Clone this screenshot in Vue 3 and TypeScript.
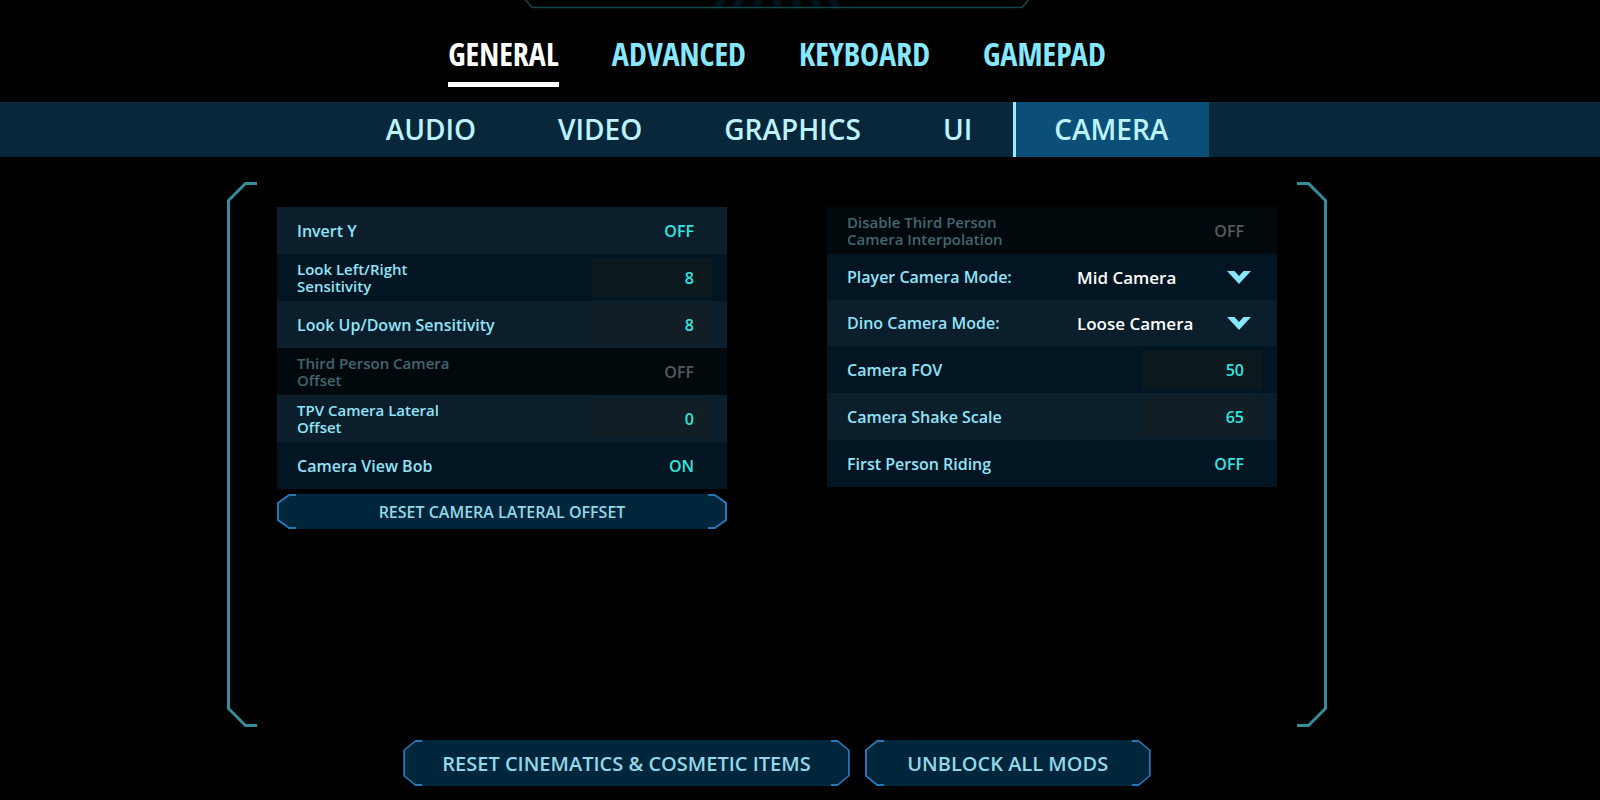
<script setup lang="ts">
import { ref } from 'vue'

type Kind = 'toggle' | 'number' | 'choice'

interface Setting {
  id: string
  label: string
  kind: Kind
  value: string
  options?: string[]
  disabled?: boolean
}

const mainTabs = ['GENERAL', 'ADVANCED', 'KEYBOARD', 'GAMEPAD']
const subTabs = ['AUDIO', 'VIDEO', 'GRAPHICS', 'UI', 'CAMERA']
const activeMain = ref('GENERAL')
const activeSub = ref('CAMERA')

const left = ref<Setting[]>([
  { id: 'invert-y', label: 'Invert Y', kind: 'toggle', value: 'OFF' },
  { id: 'look-lr', label: 'Look Left/Right\nSensitivity', kind: 'number', value: '8' },
  { id: 'look-ud', label: 'Look Up/Down Sensitivity', kind: 'number', value: '8' },
  { id: 'tp-offset', label: 'Third Person Camera\nOffset', kind: 'toggle', value: 'OFF', disabled: true },
  { id: 'tpv-lateral', label: 'TPV Camera Lateral\nOffset', kind: 'number', value: '0' },
  { id: 'view-bob', label: 'Camera View Bob', kind: 'toggle', value: 'ON' },
])

const right = ref<Setting[]>([
  { id: 'tp-interp', label: 'Disable Third Person\nCamera Interpolation', kind: 'toggle', value: 'OFF', disabled: true },
  { id: 'player-mode', label: 'Player Camera Mode:', kind: 'choice', value: 'Mid Camera', options: ['Close Camera', 'Mid Camera', 'Far Camera'] },
  { id: 'dino-mode', label: 'Dino Camera Mode:', kind: 'choice', value: 'Loose Camera', options: ['Loose Camera', 'Locked Camera'] },
  { id: 'fov', label: 'Camera FOV', kind: 'number', value: '50' },
  { id: 'shake', label: 'Camera Shake Scale', kind: 'number', value: '65' },
  { id: 'fp-riding', label: 'First Person Riding', kind: 'toggle', value: 'OFF' },
])

const sides = ['start', 'end']
const columns = [left, right]
const footerButtons = ['RESET CINEMATICS & COSMETIC ITEMS', 'UNBLOCK ALL MODS']

function flip(s: Setting) {
  s.value = s.value === 'ON' ? 'OFF' : 'ON'
}
</script>

<template>
  <div class="page">
    <svg class="crest" width="512" height="12" viewBox="0 0 512 12" aria-hidden="true">
      <defs>
        <filter id="soft" x="-20%" y="-50%" width="140%" height="200%">
          <feGaussianBlur stdDeviation="2" />
        </filter>
      </defs>
      <g filter="url(#soft)" stroke="#041c26" stroke-width="6" fill="none">
        <path d="M203 -2L195 8M220 -2L214 8M238 -2L235 8M256 -2V8M274 -2L277 8M292 -2L298 8M309 -2L317 8" />
      </g>
      <path d="M3 -2L11 7.5H501L509 -2" fill="none" stroke="#15484a" stroke-width="1.5" />
    </svg>

    <nav class="main-tabs" aria-label="Settings sections">
      <button
        v-for="tab in mainTabs"
        :key="tab"
        type="button"
        class="main-tab"
        :class="{ active: tab === activeMain }"
        @click="activeMain = tab"
      >{{ tab }}</button>
    </nav>

    <nav class="sub-tabs" aria-label="General settings">
      <button
        v-for="tab in subTabs"
        :key="tab"
        type="button"
        class="sub-tab"
        :class="{ active: tab === activeSub }"
        @click="activeSub = tab"
      >{{ tab }}</button>
    </nav>

    <main class="panel">
      <div v-for="side in sides" :key="side" class="bracket" :class="side" aria-hidden="true">
        <svg width="30" height="20" viewBox="0 0 30 20"><path d="M1.5 20V18.5L18.5 1.5H30" /></svg>
        <span class="bracket-line"></span>
        <svg width="30" height="20" viewBox="0 0 30 20"><path d="M1.5 0V1.5L18.5 18.5H30" /></svg>
      </div>

      <section v-for="(column, c) in columns" :key="c" class="column">
        <div
          v-for="s in column.value"
          :key="s.id"
          class="row"
          :class="{ 'row-choice': s.kind === 'choice', 'row-disabled': s.disabled }"
        >
          <label class="label" :class="{ small: s.label.includes('\n') }" :for="s.id">{{ s.label }}</label>
          <button
            v-if="s.kind === 'toggle'"
            :id="s.id"
            type="button"
            class="toggle"
            :disabled="s.disabled"
            @click="flip(s)"
          >{{ s.value }}</button>
          <input
            v-else-if="s.kind === 'number'"
            :id="s.id"
            v-model="s.value"
            class="number"
            type="text"
            inputmode="numeric"
          />
          <div v-else class="choice-box">
            <select :id="s.id" v-model="s.value" class="select">
              <option v-for="o in s.options" :key="o">{{ o }}</option>
            </select>
            <svg class="chevron" width="24" height="13" viewBox="0 0 24 13" aria-hidden="true">
              <path d="M0 0H7.5L12 5L16.5 0H24L12 13Z" />
            </svg>
          </div>
        </div>

        <button v-if="c === 0" type="button" class="action wide">
          <svg v-for="side in sides" :key="side" class="edge" :class="side" width="19" height="35" viewBox="0 0 19 35" aria-hidden="true">
            <path d="M19 1H12L1 9V26L12 34H19" />
          </svg>
          RESET CAMERA LATERAL OFFSET
        </button>
      </section>
    </main>

    <footer class="footer">
      <button v-for="text in footerButtons" :key="text" type="button" class="action">
        <svg v-for="side in sides" :key="side" class="edge" :class="side" width="19" height="46" viewBox="0 0 19 46" aria-hidden="true">
          <path d="M19 1H12L1 10V36L12 45H19" />
        </svg>
        {{ text }}
      </button>
    </footer>
  </div>
</template>

<style>
body {
  margin: 0;
  background: #000;
}
</style>

<style scoped>
.page {
  --offset: 46px;
  box-sizing: border-box;
  min-height: 100vh;
  display: flex;
  flex-direction: column;
  background: #000;
  color: #8fe4f8;
  font-family: "Open Sans", "Noto Sans", sans-serif;
  font-weight: 600;
  overflow: hidden;
}

button,
input,
select {
  margin: 0;
  padding: 0;
  border: 0;
  background: none;
  color: inherit;
  font: inherit;
}

button,
select {
  cursor: pointer;
}

.crest {
  display: block;
  align-self: center;
  margin-right: var(--offset);
}

.main-tabs {
  display: flex;
  justify-content: center;
  gap: 53px;
  height: 90px;
  padding-right: var(--offset);
}

.main-tab {
  align-self: flex-start;
  height: 75px;
  padding-top: 14px;
  border-bottom: 5px solid transparent;
  color: #85e8ff;
  font-family: "Open Sans Condensed", "Roboto Condensed", "Open Sans", sans-serif;
  font-size: 32px;
  font-weight: 700;
  line-height: 56px;
}

.main-tab.active {
  color: #fff;
  border-color: #fff;
}

.sub-tabs {
  display: flex;
  justify-content: center;
  padding-right: var(--offset);
  background: #08273b;
}

.sub-tab {
  height: 55px;
  padding: 0 41px 0 38px;
  border-left: 3px solid transparent;
  color: #bdf3ff;
  font-size: 28px;
  line-height: 55px;
}

.sub-tab.active {
  background: #0b4f78;
  background-clip: padding-box;
  border-color: #9ae8ff;
}

.panel {
  position: relative;
  box-sizing: border-box;
  flex: 1;
  align-self: center;
  display: grid;
  grid-template-columns: 1fr 1fr;
  align-items: start;
  gap: 100px;
  width: calc(100% - var(--offset));
  max-width: 1100px;
  margin: 25px var(--offset) 0 0;
  padding: 25px 50px;
}

.bracket {
  position: absolute;
  top: 0;
  bottom: 0;
  display: flex;
  flex-direction: column;
  width: 30px;
}

.bracket.start {
  left: 0;
}

.bracket.end {
  right: 0;
  transform: scaleX(-1);
}

.bracket svg {
  display: block;
  fill: none;
  stroke: #338e99;
  stroke-width: 3;
}

.bracket-line {
  flex: 1;
  width: 3px;
  background: #338e99;
}

.column {
  display: flex;
  flex-direction: column;
}

.row {
  box-sizing: border-box;
  display: flex;
  align-items: center;
  justify-content: space-between;
  min-height: 47px;
  padding: 0 15px 0 20px;
  background: #021522;
}

.row:nth-child(odd) {
  background: #0b1e2b;
}

.row-choice {
  min-height: 46px;
}

.row.row-disabled {
  background: #02090d;
  color: #40666f;
}

.label {
  font-size: 16px;
  line-height: 20px;
  white-space: pre-line;
}

.label.small {
  font-size: 15px;
  line-height: 17px;
}

.toggle,
.number {
  box-sizing: border-box;
  width: 120px;
  height: 39px;
  padding-right: 18px;
  color: #2fe6df;
  font-size: 16px;
  text-align: right;
}

.number {
  background: #0b181e;
}

.row:nth-child(odd) .number {
  background: #111e25;
}

.toggle:disabled {
  color: #55595d;
  cursor: default;
}

.choice-box {
  position: relative;
  width: 185px;
}

.select {
  appearance: none;
  width: 100%;
  height: 39px;
  padding-right: 40px;
  color: #fff;
  font-size: 17px;
}

.select option {
  background: #021522;
}

.chevron {
  position: absolute;
  top: 13px;
  right: 11px;
  fill: #87e4fb;
  pointer-events: none;
}

.action {
  position: relative;
  height: 46px;
  min-width: 286px;
  padding: 0 39px;
  background: #00263b;
  clip-path: polygon(0 10px, 12px 0, calc(100% - 12px) 0, 100% 10px, 100% calc(100% - 10px), calc(100% - 12px) 100%, 12px 100%, 0 calc(100% - 10px));
  color: #92d8e8;
  font-size: 20px;
}

.action.wide {
  height: 35px;
  margin-top: 5px;
  clip-path: polygon(0 8px, 12px 0, calc(100% - 12px) 0, 100% 8px, 100% calc(100% - 8px), calc(100% - 12px) 100%, 12px 100%, 0 calc(100% - 8px));
  font-size: 16px;
}

.edge {
  position: absolute;
  top: 0;
  fill: none;
  stroke: #2678b4;
  stroke-width: 2;
}

.edge.start {
  left: 0;
}

.edge.end {
  right: 0;
  transform: scaleX(-1);
}

.footer {
  display: flex;
  justify-content: center;
  gap: 15px;
  padding: 13px var(--offset) 14px 0;
}
</style>
